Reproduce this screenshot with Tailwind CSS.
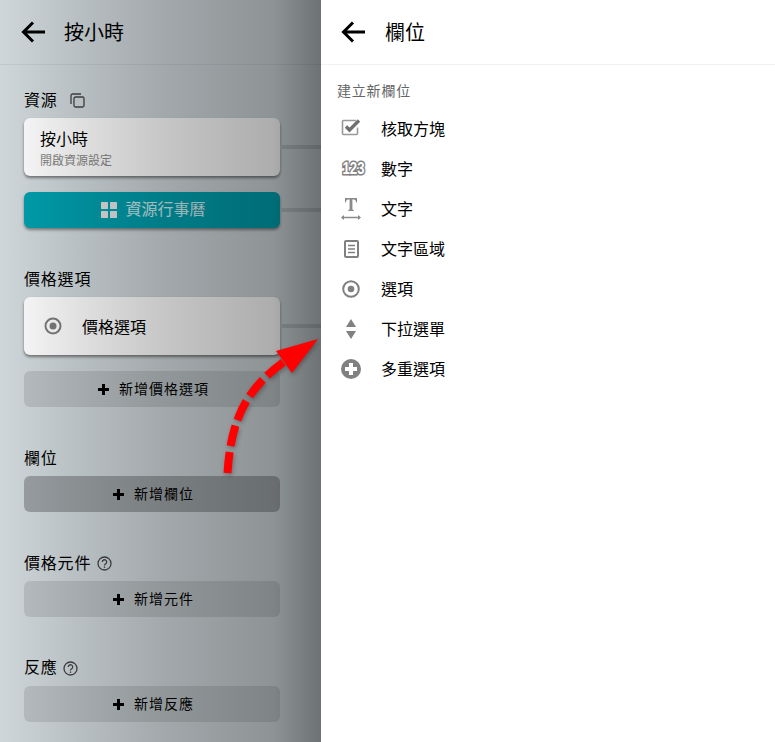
<!DOCTYPE html>
<html lang="zh-Hant">
<head>
<meta charset="utf-8">
<script src="https://cdn.jsdelivr.net/npm/@tailwindcss/browser@4"></script>
</head>
<body class="m-0 overflow-hidden bg-white font-['Liberation_Sans','Noto_Sans_CJK_TC',sans-serif] text-black">
<div class="relative flex h-[742px] w-[775px] overflow-hidden">

  <!-- Left panel -->
  <div class="relative h-full w-[321px] shrink-0 bg-[#d1d9dc]">
    <header class="flex h-[65px] items-center border-b border-[#c4ccd0] pl-[21px]">
      <svg class="h-[24px] w-[24px]" viewBox="0 0 24 24" fill="none" stroke="#000" stroke-width="3"><path d="M24 12H3M12 2.500L2.500 12l9.500 9.500"/></svg>
      <h1 class="ml-[19px] pt-[2px] text-[20px] font-normal leading-none">按小時</h1>
    </header>

    <section class="pl-[24px] pr-[41px]">
      <div class="mt-[26px] flex h-[20px] items-center text-[16px] leading-none tracking-[0.8px]">
        資源
        <svg class="ml-[12px] h-[15px] w-[15px] -mt-[1px]" viewBox="0 0 15 15" fill="none" stroke="#444" stroke-width="1.300"><rect x="4" y="4" width="10" height="10" rx="1.500"/><path d="M1 11V2.500A1.500 1.500 0 0 1 2.500 1H11"/></svg>
      </div>
      <div class="relative mt-[7px] flex h-[58px] flex-col rounded-[6px] bg-white pl-[16px] pt-[13px] shadow-[0_2px_3px_rgba(0,0,0,0.45)]">
        <span class="text-[16px] leading-[18px]">按小時</span>
        <span class="mt-[4px] text-[12px] leading-[16px] text-[#888]">開啟資源設定</span>
        <span class="absolute left-full top-[27px] h-[4px] w-[41px] bg-[#b8c0c4]"></span>
      </div>
      <div class="relative mt-[16px] flex h-[36px] items-center justify-center rounded-[6px] bg-[#00a0ae] pl-[3px] text-[16px] text-white/80 shadow-[0_2px_3px_rgba(0,0,0,0.4)]">
        <svg class="mr-[8px] h-[16px] w-[16px]" viewBox="0 0 16 16" fill="#e6e6e6"><rect width="7" height="7" rx="0.500"/><rect x="9" width="7" height="7" rx="0.500"/><rect y="9" width="7" height="7" rx="0.500"/><rect x="9" y="9" width="7" height="7" rx="0.500"/></svg>
        資源行事曆
        <span class="absolute left-full top-[16px] h-[4px] w-[41px] bg-[#b8c0c4]"></span>
      </div>
    </section>

    <section class="pl-[24px] pr-[41px]">
      <div class="mt-[42px] flex h-[20px] items-center text-[16px] leading-none tracking-[0.8px]">價格選項</div>
      <div class="relative mt-[7px] flex h-[58px] items-center rounded-[6px] bg-white pl-[20px] shadow-[0_2px_3px_rgba(0,0,0,0.45)]">
        <svg class="h-[18px] w-[18px]" viewBox="0 0 18 18"><circle cx="9" cy="9" r="7.500" fill="none" stroke="#7d7d7d" stroke-width="2"/><circle cx="9" cy="9" r="3.500" fill="#7d7d7d"/></svg>
        <span class="ml-[20px] pt-[3px] text-[16px]">價格選項</span>
        <span class="absolute left-full top-[27px] h-[4px] w-[41px] bg-[#b8c0c4]"></span>
      </div>
      <button class="mt-[16px] flex h-[36px] w-full items-center justify-center rounded-[6px] bg-black/10 pl-[3px] text-[14px] tracking-[1px]">
        <svg class="mr-[10px] h-[11px] w-[11px]" viewBox="0 0 11 11"><path d="M4 0h3v4h4v3H7v4H4V7H0V4h4z"/></svg>新增價格選項
      </button>
    </section>

    <section class="pl-[24px] pr-[41px]">
      <div class="mt-[41px] flex h-[20px] items-center pt-[2px] text-[16px] leading-none tracking-[0.8px]">欄位</div>
      <button class="mt-[8px] flex h-[36px] w-full items-center justify-center rounded-[6px] bg-black/25 pl-[3px] text-[14px] tracking-[1px]">
        <svg class="mr-[10px] h-[11px] w-[11px]" viewBox="0 0 11 11"><path d="M4 0h3v4h4v3H7v4H4V7H0V4h4z"/></svg>新增欄位
      </button>
    </section>

    <section class="pl-[24px] pr-[41px]">
      <div class="mt-[41px] flex h-[20px] items-center pt-[2px] text-[16px] leading-none tracking-[0.8px]">
        價格元件
        <svg class="ml-[6px] h-[15px] w-[15px] -mt-[2px]" viewBox="0 0 15 15" fill="none" stroke="#444" stroke-width="1.300"><circle cx="7.500" cy="7.500" r="6.500"/><path d="M5.300 6a2.200 2.200 0 1 1 3.400 1.800c-.8.500-1.200.9-1.200 1.700" /><path d="M7.500 10.500v1.400"/></svg>
      </div>
      <button class="mt-[8px] flex h-[36px] w-full items-center justify-center rounded-[6px] bg-black/10 pl-[3px] text-[14px] tracking-[1px]">
        <svg class="mr-[10px] h-[11px] w-[11px]" viewBox="0 0 11 11"><path d="M4 0h3v4h4v3H7v4H4V7H0V4h4z"/></svg>新增元件
      </button>
    </section>

    <section class="pl-[24px] pr-[41px]">
      <div class="mt-[41px] flex h-[20px] items-center text-[16px] leading-none tracking-[0.8px]">
        反應
        <svg class="ml-[5px] h-[15px] w-[15px]" viewBox="0 0 15 15" fill="none" stroke="#444" stroke-width="1.300"><circle cx="7.500" cy="7.500" r="6.500"/><path d="M5.300 6a2.200 2.200 0 1 1 3.400 1.800c-.8.500-1.200.9-1.200 1.700" /><path d="M7.500 10.500v1.400"/></svg>
      </div>
      <button class="mt-[8px] flex h-[36px] w-full items-center justify-center rounded-[6px] bg-black/10 pl-[3px] text-[14px] tracking-[1px]">
        <svg class="mr-[10px] h-[11px] w-[11px]" viewBox="0 0 11 11"><path d="M4 0h3v4h4v3H7v4H4V7H0V4h4z"/></svg>新增反應
      </button>
    </section>

    <!-- dim overlay -->
    <div class="pointer-events-none absolute inset-0 bg-[linear-gradient(90deg,rgba(0,0,0,0.01)_0%,rgba(0,0,0,0.12)_25%,rgba(0,0,0,0.22)_50%,rgba(0,0,0,0.32)_85%,rgba(0,0,0,0.48)_100%)]"></div>
  </div>

  <!-- Right panel -->
  <div class="h-full flex-1 bg-white">
    <header class="flex h-[65px] items-center border-b border-[#f2f2f2] pl-[20px]">
      <svg class="h-[24px] w-[24px]" viewBox="0 0 24 24" fill="none" stroke="#000" stroke-width="3"><path d="M24 12H3M12 2.500L2.500 12l9.500 9.500"/></svg>
      <h2 class="ml-[20px] pt-[2px] text-[20px] font-normal leading-none">欄位</h2>
    </header>
    <p class="ml-[16px] mt-[16px] text-[14px] leading-[20px] tracking-[0.8px] text-[#666]">建立新欄位</p>
    <ul class="mt-[8px] ml-[20px] flex flex-col text-[16px]">
      <li class="flex h-[40px] items-center">
        <span class="flex w-[40px] shrink-0"><svg class="h-[20px] w-[24px] -mt-[4px]" viewBox="0 0 24 20" fill="none"><path d="M15 3.500H2.500a1 1 0 0 0-1 1v12a1 1 0 0 0 1 1h13a1 1 0 0 0 1-1v-6" stroke="#999" stroke-width="1.600"/><path d="M5 9.500l3.500 3.500L18 3.500" stroke="#6f6f6f" stroke-width="3.400"/></svg></span><span class="pt-[2px]">核取方塊</span>
      </li>
      <li class="flex h-[40px] items-center">
        <span class="flex w-[40px] shrink-0"><svg class="h-[18px] w-[26px] -mt-[2px]" viewBox="0 0 26 18"><text transform="translate(12.500 15) scale(0.8 1)" text-anchor="middle" font-family="Liberation Sans" font-weight="700" font-size="16.500" fill="#fff" stroke="#808080" stroke-width="3.200" paint-order="stroke">123</text></svg></span><span class="pt-[2px]">數字</span>
      </li>
      <li class="flex h-[40px] items-center">
        <span class="flex w-[40px] shrink-0"><svg class="h-[24px] w-[20px]" viewBox="0 0 20 24" fill="#8a8a8a"><path d="M4 1h12v4.500h-.8c-.3-2-1-3-2.500-3h-1.300v10l1.300.5v1H7.300v-1l1.300-.5v-10H7.300c-1.500 0-2.200 1-2.500 3H4z"/><path d="M1 20.500h18" stroke="#8a8a8a" stroke-width="1.500"/><path d="M0 20.500l3-2.500v5zM20 20.500l-3-2.500v5z"/></svg></span><span class="pt-[2px]">文字</span>
      </li>
      <li class="flex h-[40px] items-center">
        <span class="flex w-[40px] shrink-0 pl-[3px]"><svg class="h-[18px] w-[15px]" viewBox="0 0 15 18" fill="none" stroke="#808080"><rect x="1" y="1" width="13" height="16" rx="1" stroke-width="2"/><path d="M4 5.500h7M4 9h7M4 12.500h7" stroke-width="1.500"/></svg></span><span class="pt-[2px]">文字區域</span>
      </li>
      <li class="flex h-[40px] items-center">
        <span class="flex w-[40px] shrink-0 pl-[1px]"><svg class="h-[18px] w-[18px]" viewBox="0 0 18 18"><circle cx="9" cy="9" r="7.800" fill="none" stroke="#808080" stroke-width="2"/><circle cx="9" cy="9" r="3.300" fill="#808080"/></svg></span><span class="pt-[2px]">選項</span>
      </li>
      <li class="flex h-[40px] items-center">
        <span class="flex w-[40px] shrink-0 pl-[4px]"><svg class="h-[20px] w-[12px]" viewBox="0 0 12 20" fill="#808080"><path d="M6 0l5 8H1zM1 12h10l-5 8z"/></svg></span><span class="pt-[2px]">下拉選單</span>
      </li>
      <li class="flex h-[40px] items-center">
        <span class="flex w-[40px] shrink-0"><svg class="h-[20px] w-[20px]" viewBox="0 0 20 20"><circle cx="10" cy="10" r="10" fill="#808080"/><path d="M8 4h4v4h4v4h-4v4H8v-4H4V8h4z" fill="#fff"/></svg></span><span class="pt-[2px]">多重選項</span>
      </li>
    </ul>
  </div>

  <!-- Red arrow overlay -->
  <svg class="pointer-events-none absolute left-0 top-0 h-[742px] w-[775px] drop-shadow-[1px_2px_2px_rgba(0,0,0,0.3)]" viewBox="0 0 775 742" fill="none">
    <path d="M227.500 473C231 420 245 390 285 361" stroke="#ff0000" stroke-width="8" stroke-dasharray="21 6"/>
    <path d="M318 339L276 351L292 373Z" fill="#ff0000"/>
  </svg>
</div>
</body>
</html>
